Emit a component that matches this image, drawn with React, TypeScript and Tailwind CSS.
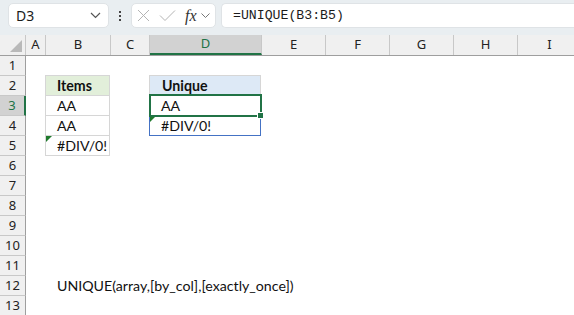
import React from "react";

const colW = [20, 65, 39, 112, 64, 64, 64, 64, 64];
const colL = ["A", "B", "C", "D", "E", "F", "G", "H", "I"];

function Tri() {
  return (
    <svg className="absolute left-0 top-0" width="6" height="6" viewBox="0 0 6 6">
      <polygon points="0,0 6,0 0,6" fill="#1f7a2c" />
    </svg>
  );
}

function BodyRow({ n }: { n: number }) {
  const sel = n === 3;
  const cellFont = "font-['Lato',sans-serif] text-[14.2px] text-[#111]";
  const Bcell = () => {
    if (n >= 2 && n <= 5) {
      const txt = n === 2 ? "Items" : n === 5 ? "#DIV/0!" : "AA";
      return (
        <div
          className={`relative w-[65px] h-full border-x border-b border-[#d6d6d6] flex items-center pl-[11px] ${
            n === 2 ? "bg-[#e2efda] font-bold shadow-[0_-1px_0_#d6d6d6]" : "bg-white"
          } ${cellFont}`}
        >
          {txt}
          {n === 5 && <Tri />}
        </div>
      );
    }
    if (n === 12) {
      return (
        <div className={`relative w-[65px] h-full flex items-center pl-[12px] whitespace-nowrap ${cellFont}`}>
          UNIQUE(array,[by_col],[exactly_once])
        </div>
      );
    }
    return <div className="w-[65px] h-full" />;
  };
  const Dcell = () => {
    if (n === 2)
      return (
        <div
          className={`w-[112px] h-full border-x border-b border-[#d6d6d6] bg-[#dde9f6] shadow-[0_-1px_0_#d6d6d6] flex items-center pl-[12px] font-bold ${cellFont}`}
        >
          Unique
        </div>
      );
    if (n === 3)
      return (
        <div className={`relative w-[112px] h-full bg-white flex items-center pl-[12px] ${cellFont}`}>
          AA
          <div className="absolute z-10 left-0 top-[-2px] right-[-1px] bottom-[-1px] border-2 border-[#217346]" />
          <div className="absolute z-20 left-[108px] top-[16px] w-[7px] h-[7px] bg-[#217346] border border-white" />
        </div>
      );
    if (n === 4)
      return (
        <div
          className={`relative w-[112px] h-full border-x border-b border-[#4472c4] bg-white flex items-center pl-[11px] ${cellFont}`}
        >
          #DIV/0!
          <Tri />
        </div>
      );
    return <div className="w-[112px] h-full" />;
  };
  return (
    <div className="flex h-[20px]">
      <div
        className={`w-[26px] shrink-0 h-full flex items-center justify-center border-b border-b-[#c8c8c8] font-['Noto_Sans',sans-serif] text-[13px] ${
          sel
            ? "bg-[#d2d2d2] text-[#217346] border-r-2 border-r-[#217346]"
            : "bg-[#f0f0f0] text-[#222] border-r border-r-[#9e9e9e]"
        }`}
      >
        {n}
      </div>
      <div className="w-[19px] shrink-0 h-full" />
      <div className="shrink-0 h-full">{Bcell()}</div>
      <div className="w-[39px] shrink-0 h-full" />
      <div className="shrink-0 h-full">{Dcell()}</div>
      <div className="flex-1 h-full" />
    </div>
  );
}

export default function App() {
  return (
    <div className="w-[574px] h-[315px] overflow-hidden bg-white relative">
      <div className="h-[35px] bg-[#e9eef1] flex items-start pt-[3px]">
        <div className="ml-[8px] w-[101px] h-[25px] bg-white rounded-[5px] border border-[#dfe3e6] flex items-center justify-between pl-[7px] pr-[7px]">
          <span className="font-['Noto_Sans',sans-serif] text-[14px] text-[#1b1b1b]">D3</span>
          <svg width="11" height="7" viewBox="0 0 11 7">
            <path d="M1 1 L5.5 5.5 L10 1" fill="none" stroke="#555" strokeWidth="1.2" />
          </svg>
        </div>
        <div className="w-[22px] h-[25px] flex flex-col items-center justify-center gap-[2px]">
          <div className="w-[2px] h-[2px] bg-[#444]" />
          <div className="w-[2px] h-[2px] bg-[#444]" />
          <div className="w-[2px] h-[2px] bg-[#444]" />
        </div>
        <div className="w-[85px] h-[25px] bg-white rounded-[5px] border border-[#dfe3e6] flex items-center pl-[5px]">
          <svg width="13" height="13" viewBox="0 0 13 13">
            <path d="M1 1 L12 12 M12 1 L1 12" stroke="#b4b4b4" strokeWidth="1" fill="none" />
          </svg>
          <svg className="ml-[9px]" width="17" height="13" viewBox="0 0 17 13">
            <path d="M1 6.5 L6 11.5 L16 1.5" stroke="#b4b4b4" strokeWidth="1" fill="none" />
          </svg>
          <span className="ml-[9px] font-['Liberation_Serif',serif] italic text-[16px] text-[#333] leading-none">fx</span>
          <svg className="ml-[4px]" width="9" height="6" viewBox="0 0 9 6">
            <path d="M0.5 0.5 L4.5 4.5 L8.5 0.5" fill="none" stroke="#777" strokeWidth="1" />
          </svg>
        </div>
        <div className="ml-[5px] flex-1 h-[25px] bg-white rounded-l-[5px] border border-r-0 border-[#dfe3e6] flex items-center pl-[11px]">
          <span className="font-['Liberation_Mono',monospace] text-[13.2px] text-[#1b1b1b]">=UNIQUE(B3:B5)</span>
        </div>
      </div>
      <div className="flex h-[21px] bg-[#f0f0f0] border-b border-[#9e9e9e]">
        <div className="relative w-[26px] shrink-0 h-full border-r border-[#c8c8c8]">
          <svg className="absolute right-[3px] bottom-[3px]" width="12" height="12" viewBox="0 0 12 12">
            <polygon points="12,0 12,12 0,12" fill="#b9b9b9" />
          </svg>
        </div>
        {colL.map((l, i) => {
          const sel = l === "D";
          return (
            <div
              key={l}
              style={{ width: colW[i] }}
              className={`shrink-0 h-full flex items-center justify-center border-r border-[#c8c8c8] font-['Noto_Sans',sans-serif] text-[13px] ${
                sel ? "bg-[#d2d2d2] text-[#217346] border-b-2 border-b-[#217346]" : "text-[#222]"
              }`}
            >
              {l}
            </div>
          );
        })}
      </div>
      {Array.from({ length: 13 }, (_, i) => (
        <BodyRow key={i} n={i + 1} />
      ))}
    </div>
  );
}
